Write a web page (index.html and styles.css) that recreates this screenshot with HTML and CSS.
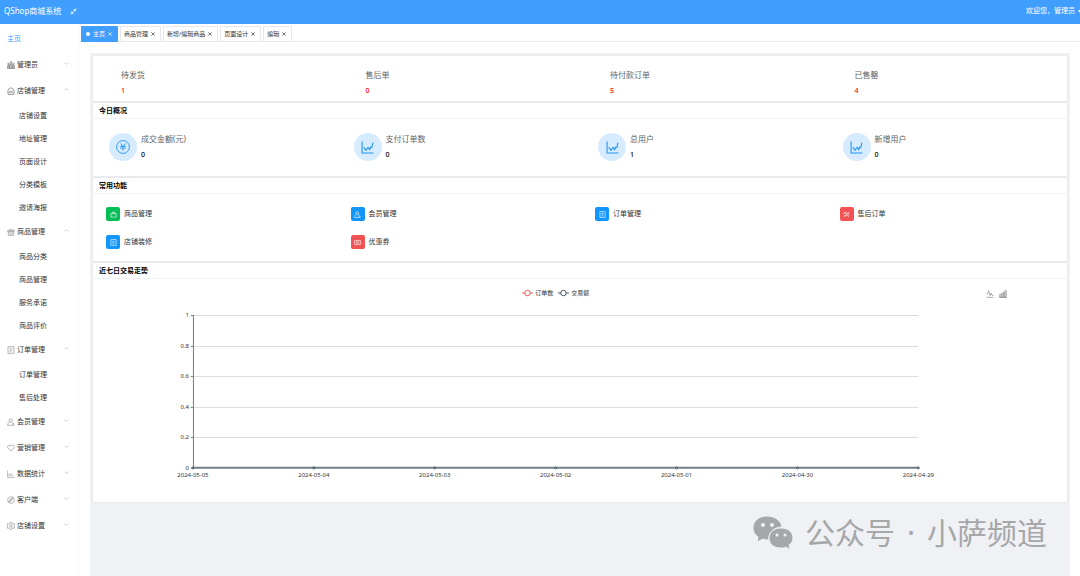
FILE: index.html
```html
<!DOCTYPE html>
<html lang="zh-CN">
<head>
  <meta charset="UTF-8">
  <meta name="viewport" content="width=device-width, initial-scale=1">
  <title>QShop商城系统</title>
  <link rel="stylesheet" href="styles.css">
</head>
<body>
  <!-- 图标 -->
  <svg class="sprite" aria-hidden="true">
    <symbol id="i-down" viewBox="0 0 12 12"><path d="M1 4l5 4 5-4"/></symbol>
    <symbol id="i-up" viewBox="0 0 12 12"><path d="M1 8l5-4 5 4"/></symbol>
    <symbol id="i-close" viewBox="0 0 12 12"><path d="M1 1l10 10M11 1L1 11"/></symbol>
    <symbol id="i-shrink" viewBox="0 0 24 24"><path d="M22 2l-8 8M14 3v7h7M2 22l8-8M3 14h7v7"/></symbol>
    <symbol id="i-team" viewBox="0 0 24 24"><circle cx="12" cy="5" r="3"/><circle cx="4" cy="9" r="2"/><circle cx="20" cy="9" r="2"/><path d="M8 22V11h8v11M2 22v-8h4v8M22 22v-8h-4v8M1 22h22M12 11v11"/></symbol>
    <symbol id="i-shop" viewBox="0 0 24 24"><path d="M3 22V8l9-6 9 6v14zM8 18v-5M12 18v-8M16 18v-5"/></symbol>
    <symbol id="i-gift" viewBox="0 0 24 24"><path d="M2 7h20v4H2zM4 11v11h16V11M9 7v15M15 7v15M12 7L7 2M12 7l5-5"/></symbol>
    <symbol id="i-order" viewBox="0 0 24 24"><path d="M3 2h18v20H3zM8 8h8M8 13h8M8 17h4"/></symbol>
    <symbol id="i-user" viewBox="0 0 24 24"><circle cx="11" cy="7" r="5"/><path d="M14 12c4 1 7 4 7 10H2c0-6 3-9 6-10M15 18h4"/></symbol>
    <symbol id="i-heart" viewBox="0 0 24 24"><path d="M12 21L3 12C-1 7 5 0 12 6c7-6 13 1 9 6z"/></symbol>
    <symbol id="i-stat" viewBox="0 0 24 24"><path d="M2 2v20h21M7 18v-6M12 18V9M17 18v-4"/></symbol>
    <symbol id="i-client" viewBox="0 0 24 24"><circle cx="12" cy="12" r="10"/><path d="M17 7l-3 7-7 3 3-7zM4 18L18 4"/></symbol>
    <symbol id="i-gear" viewBox="0 0 24 24"><path d="M9 2h6l1 3 3 1 3-1 1 5-2 2 2 2-1 5-3-1-3 1-1 3H9l-1-3-3-1-3 1-1-5 2-2-2-2 1-5 3 1 3-1z"/><circle cx="12" cy="12" r="4"/></symbol>
    <symbol id="i-trend" viewBox="0 0 24 24"><path d="M2 1v21h21M5 11l4 6 4-5 3 4 2-5 2 1 2-9"/></symbol>
    <symbol id="i-money" viewBox="0 0 24 24"><circle cx="12" cy="12" r="11"/><path d="M8 6l4 5 4-5M7 11h10M7 14h10M12 11v7"/></symbol>
    <symbol id="i-bag" viewBox="0 0 24 24"><path d="M3 8h18v13H3zM8 11V7c0-6 8-6 8 0v4"/></symbol>
    <symbol id="i-tools" viewBox="0 0 24 24"><path d="M4 3l16 18M20 3L4 21M2 8h8V2M14 14h8M14 8h8M3 16h7"/></symbol>
    <symbol id="i-coupon" viewBox="0 0 24 24"><path d="M2 5h20v14H2zM6 10h12M6 14h12"/></symbol>
    <symbol id="i-line" viewBox="0 0 24 24"><path d="M1 12h3l4-10 4 15 3-8 3 7h5M1 22h22"/></symbol>
    <symbol id="i-bar" viewBox="0 0 24 24"><path d="M2 13h4v9H2zM8 10h4v12H8zM13 6h4v16h-4zM18 2h4v20h-4zM1 22h22"/></symbol>
  </svg>

  <header class="topbar">
    <span class="brand">QShop商城系统</span>
    <button class="fold" aria-label="收起菜单"><svg class="icon"><use href="#i-shrink"/></svg></button>
    <button class="account">欢迎您，管理员<i class="caret"></i></button>
  </header>

  <div class="layout">
    <nav class="sidebar">
      <a class="menu-item active" href="#">主页</a>
      <button class="menu-item dark"><svg class="icon"><use href="#i-team"/></svg>管理员<svg class="arrow"><use href="#i-down"/></svg></button>
      <button class="menu-item dark"><svg class="icon"><use href="#i-shop"/></svg>店铺管理<svg class="arrow"><use href="#i-up"/></svg></button>
      <ul class="submenu">
        <li><a href="#">店铺设置</a></li>
        <li><a href="#">地址管理</a></li>
        <li><a href="#">页面设计</a></li>
        <li><a href="#">分类模板</a></li>
        <li><a href="#">邀请海报</a></li>
      </ul>
      <button class="menu-item"><svg class="icon"><use href="#i-gift"/></svg>商品管理<svg class="arrow"><use href="#i-up"/></svg></button>
      <ul class="submenu">
        <li><a href="#">商品分类</a></li>
        <li><a href="#">商品管理</a></li>
        <li><a href="#">服务承诺</a></li>
        <li><a href="#">商品评价</a></li>
      </ul>
      <button class="menu-item"><svg class="icon"><use href="#i-order"/></svg>订单管理<svg class="arrow"><use href="#i-up"/></svg></button>
      <ul class="submenu">
        <li><a href="#">订单管理</a></li>
        <li><a href="#">售后处理</a></li>
      </ul>
      <button class="menu-item"><svg class="icon"><use href="#i-user"/></svg>会员管理<svg class="arrow"><use href="#i-down"/></svg></button>
      <button class="menu-item"><svg class="icon"><use href="#i-heart"/></svg>营销管理<svg class="arrow"><use href="#i-down"/></svg></button>
      <button class="menu-item"><svg class="icon"><use href="#i-stat"/></svg>数据统计<svg class="arrow"><use href="#i-down"/></svg></button>
      <button class="menu-item"><svg class="icon"><use href="#i-client"/></svg>客户端<svg class="arrow"><use href="#i-down"/></svg></button>
      <button class="menu-item"><svg class="icon"><use href="#i-gear"/></svg>店铺设置<svg class="arrow"><use href="#i-down"/></svg></button>
    </nav>

    <div class="main">
      <div class="tabs">
        <div class="tab current"><i class="dot"></i><a href="#">主页</a><button aria-label="关闭"><svg><use href="#i-close"/></svg></button></div>
        <div class="tab"><a href="#">商品管理</a><button aria-label="关闭"><svg><use href="#i-close"/></svg></button></div>
        <div class="tab"><a href="#">新增/编辑商品</a><button aria-label="关闭"><svg><use href="#i-close"/></svg></button></div>
        <div class="tab"><a href="#">页面设计</a><button aria-label="关闭"><svg><use href="#i-close"/></svg></button></div>
        <div class="tab"><a href="#">编辑</a><button aria-label="关闭"><svg><use href="#i-close"/></svg></button></div>
      </div>

      <main class="content">
        <section class="card">
          <div class="row todo">
            <div><p class="label">待发货</p><p class="num">1</p></div>
            <div><p class="label">售后单</p><p class="num">0</p></div>
            <div><p class="label">待付款订单</p><p class="num">5</p></div>
            <div><p class="label">已售罄</p><p class="num">4</p></div>
          </div>
        </section>

        <section class="card">
          <h2>今日概况</h2>
          <div class="row overview">
            <div class="stat"><span class="round"><svg class="icon"><use href="#i-money"/></svg></span><div><p class="label">成交金额(元)</p><p class="num">0</p></div></div>
            <div class="stat"><span class="round"><svg class="icon trend"><use href="#i-trend"/></svg></span><div><p class="label">支付订单数</p><p class="num">0</p></div></div>
            <div class="stat"><span class="round"><svg class="icon trend"><use href="#i-trend"/></svg></span><div><p class="label">总用户</p><p class="num">1</p></div></div>
            <div class="stat"><span class="round"><svg class="icon trend"><use href="#i-trend"/></svg></span><div><p class="label">新增用户</p><p class="num">0</p></div></div>
          </div>
        </section>

        <section class="card">
          <h2>常用功能</h2>
          <div class="row quick">
            <a href="#"><span class="tile green"><svg class="icon"><use href="#i-bag"/></svg></span>商品管理</a>
            <a href="#"><span class="tile blue"><svg class="icon"><use href="#i-user"/></svg></span>会员管理</a>
            <a href="#"><span class="tile blue"><svg class="icon"><use href="#i-order"/></svg></span>订单管理</a>
            <a href="#"><span class="tile red"><svg class="icon"><use href="#i-tools"/></svg></span>售后订单</a>
            <a href="#"><span class="tile blue"><svg class="icon"><use href="#i-order"/></svg></span>店铺装修</a>
            <a href="#"><span class="tile red"><svg class="icon"><use href="#i-coupon"/></svg></span>优惠券</a>
          </div>
        </section>

        <section class="card">
          <h2>近七日交易走势</h2>
          <div class="chart">
            <div class="chart-bar">
              <div class="legend">
                <button class="orders"><svg viewBox="0 0 12 8"><path d="M0 4h3M9 4h3"/><circle cx="6" cy="4" r="3"/></svg>订单数</button>
                <button class="amount"><svg viewBox="0 0 12 8"><path d="M0 4h3M9 4h3"/><circle cx="6" cy="4" r="3"/></svg>交易额</button>
              </div>
              <div class="toolbox">
                <button aria-label="切换为折线图"><svg class="icon"><use href="#i-line"/></svg></button>
                <button aria-label="切换为柱状图"><svg class="icon"><use href="#i-bar"/></svg></button>
              </div>
            </div>
            <svg class="plot" viewBox="0 0 926 202">
              <path class="grid" d="M100 15.5h726M100 46.5h726M100 76.5h726M100 107.5h726M100 137.5h726"/>
              <path class="axis" d="M100.5 15v153M98 15.5h2M98 46.5h2M98 76.5h2M98 107.5h2M98 137.5h2M98 168.5h2"/>
              <path class="series" d="M100 168h726"/>
              <g class="points">
                <circle cx="100" cy="168" r="1"/>
                <circle cx="221" cy="168" r="1"/>
                <circle cx="342" cy="168" r="1"/>
                <circle cx="463" cy="168" r="1"/>
                <circle cx="584" cy="168" r="1"/>
                <circle cx="705" cy="168" r="1"/>
                <circle cx="826" cy="168" r="1"/>
              </g>
              <g class="y-labels">
                <text x="96" y="17">1</text>
                <text x="96" y="48">0.8</text>
                <text x="96" y="78">0.6</text>
                <text x="96" y="109">0.4</text>
                <text x="96" y="139">0.2</text>
                <text x="96" y="170">0</text>
              </g>
              <g class="x-labels">
                <text x="100" y="177">2024-05-05</text>
                <text x="221" y="177">2024-05-04</text>
                <text x="342" y="177">2024-05-03</text>
                <text x="463" y="177">2024-05-02</text>
                <text x="584" y="177">2024-05-01</text>
                <text x="705" y="177">2024-04-30</text>
                <text x="826" y="177">2024-04-29</text>
              </g>
            </svg>
          </div>
        </section>

        <div class="watermark">
          <svg viewBox="0 0 40 34">
            <path d="M14 0C6 0 0 5 0 12c0 4 2 7 5 9l-1 5 6-3c2 1 4 1 6 1-1-7 5-13 13-13C28 4 21 0 14 0z"/>
            <path d="M28 12c-7 0-12 4-12 10s5 10 12 10c2 0 3 0 5-1l4 3-1-5c3-2 4-4 4-7 0-6-5-10-12-10z"/>
            <g class="eyes"><circle cx="10" cy="9" r="2"/><circle cx="19" cy="9" r="2"/><circle cx="24" cy="19" r="1.5"/><circle cx="32" cy="19" r="1.5"/></g>
          </svg>
          <span>公众号</span><span>·</span><span>小萨频道</span>
        </div>
      </main>
    </div>
  </div>
</body>
</html>
```
FILE: styles.css
```css
* {
  box-sizing: border-box;
}

body {
  margin: 0;
  min-height: 100vh;
  display: flex;
  flex-direction: column;
  font-family: "Noto Sans", "Noto Sans CJK SC", sans-serif;
  font-size: 7px;
  line-height: 12px;
  color: #303133;
  background-color: #fff;
}

p, h2, ul {
  margin: 0;
  padding: 0;
}

ul {
  list-style: none;
}

a {
  color: inherit;
  text-decoration: none;
}

button {
  display: flex;
  align-items: center;
  padding: 0;
  border: none;
  background: none;
  font: inherit;
  color: inherit;
  cursor: pointer;
}

svg {
  flex: none;
  fill: none;
  stroke: currentColor;
}

.sprite {
  display: none;
}

.icon {
  width: 8px;
  height: 8px;
  stroke-width: 2;
}

/* 顶栏 */
.topbar {
  display: flex;
  align-items: center;
  height: 24px;
  padding-left: 4px;
  padding-bottom: 2px;
  background-color: #409eff;
  color: #fff;
}

.brand {
  font-size: 8px;
}

.fold {
  margin-left: 9px;
}

.fold .icon {
  width: 7px;
  height: 7px;
  stroke-width: 3;
}

.account {
  margin-left: auto;
  gap: 3px;
}

.caret {
  border: 2px solid transparent;
  border-top: 3px solid #fff;
  border-right: 0;
  border-bottom: 0;
}

.layout {
  flex: 1;
  display: flex;
}

/* 左侧菜单 */
.sidebar {
  width: 79px;
  flex: none;
  padding-top: 2px;
  border-right: 1px solid #f6f7f9;
}

.menu-item {
  display: flex;
  align-items: center;
  width: 100%;
  height: 26px;
  padding: 0 9px 0 7px;
  gap: 2px;
}

.menu-item.active {
  color: #409eff;
}

.menu-item .icon {
  color: #909399;
}

.menu-item.dark .icon {
  color: #606266;
}

.arrow {
  width: 5px;
  height: 5px;
  margin-left: auto;
  margin-bottom: 4px;
  color: #909399;
}

.submenu a {
  display: block;
  height: 23px;
  padding-left: 19px;
  line-height: 23px;
}

/* 标签页 */
.main {
  flex: 1;
  min-width: 0;
  display: flex;
  flex-direction: column;
}

.tabs {
  display: flex;
  gap: 2px;
  height: 18px;
  padding: 2px 2px 0;
  border-bottom: 1px solid #eceef2;
}

.tab {
  display: flex;
  align-items: center;
  gap: 3px;
  height: 16px;
  padding: 0 5px 0 3px;
  border: 1px solid #e4e7ed;
  font-size: 6px;
}

.tab svg {
  width: 4px;
  height: 4px;
  stroke-width: 2;
}

.tab.current {
  padding-left: 4px;
  background-color: #409eff;
  border-color: #409eff;
  color: #fff;
}

.dot {
  width: 4px;
  height: 4px;
  border-radius: 50%;
  background-color: #fff;
}

/* 内容区 */
.content {
  position: relative;
  flex: 1;
  display: flex;
  flex-direction: column;
  gap: 2px;
  margin: 11px 10px 0 11px;
  padding: 3px;
  background-color: #eff1f5;
}

.card {
  border-radius: 2px;
  background-color: #fff;
  box-shadow: 0 0 2px rgba(0, 0, 0, 0.1);
}

.card h2 {
  height: 16px;
  padding-left: 6px;
  border-bottom: 1px solid #f0f2f5;
  font-size: 7px;
  line-height: 16px;
  color: #000;
}

.row {
  display: grid;
  grid-template-columns: repeat(4, 1fr);
  margin: 0 -2px;
}

.label {
  margin-bottom: 4px;
  font-size: 8px;
  color: #606266;
}

.num {
  font-weight: 500;
  color: #000;
}

.todo {
  padding: 13px 0 4px 30px;
  margin-right: -32px;
}

.todo .num {
  color: #f00;
}

.overview {
  padding: 14px 0 15px;
}

.stat {
  display: flex;
  align-items: center;
  gap: 4px;
  padding-left: 18px;
}

.round {
  display: flex;
  align-items: center;
  justify-content: center;
  width: 28px;
  height: 28px;
  border-radius: 50%;
  background-color: #d6ebfd;
  color: #2196f3;
}

.round .icon {
  width: 14px;
  height: 14px;
  stroke-width: 1.5;
}

.round .trend {
  width: 13px;
  height: 13px;
  stroke-width: 2;
}

.quick {
  row-gap: 14px;
  padding: 13px 0 12px;
}

.quick a {
  display: flex;
  align-items: center;
  gap: 4px;
  padding-left: 15px;
}

.tile {
  display: flex;
  align-items: center;
  justify-content: center;
  width: 14px;
  height: 14px;
  border-radius: 2px;
  color: #fff;
}

.tile .icon {
  width: 7px;
  height: 7px;
}

.green {
  background-color: #04be56;
}

.blue {
  background-color: #1296fb;
}

.red {
  background-color: #f15354;
}

/* 走势图 */
.chart {
  width: 95%;
}

.chart-bar {
  display: grid;
  grid-template-columns: 1fr auto 1fr;
  height: 21px;
  padding-top: 8px;
}

.legend {
  display: flex;
  grid-column: 2;
  gap: 5px;
  font-size: 6px;
}

.legend button {
  height: 12px;
  gap: 2px;
}

.legend svg {
  width: 11px;
  height: 8px;
}

.orders svg {
  stroke: #d9534f;
}

.amount svg {
  stroke: #2f4554;
}

.toolbox {
  display: flex;
  justify-content: flex-end;
  gap: 5px;
  padding-right: 11px;
  color: #888;
}

.plot {
  display: block;
  width: 100%;
}

.plot .grid {
  stroke: #dcdcdc;
}

.plot .axis {
  stroke: #777;
}

.plot .series {
  stroke: #6f7f8b;
  stroke-width: 2;
}

.plot .points {
  fill: #fff;
  stroke: #2f4554;
}

.plot text {
  stroke: none;
  fill: #333;
  font-size: 6px;
}

.y-labels {
  text-anchor: end;
}

.x-labels {
  text-anchor: middle;
}

/* 水印 */
.watermark {
  position: absolute;
  right: 23px;
  bottom: 23px;
  display: flex;
  align-items: center;
  gap: 12px;
  font-size: 30px;
  line-height: 40px;
  color: #a6a7a9;
}

.watermark svg {
  width: 40px;
  height: 34px;
  stroke: #eff1f5;
  fill: #a6a7a9;
}

.watermark .eyes {
  fill: #eff1f5;
  stroke: none;
}
```
